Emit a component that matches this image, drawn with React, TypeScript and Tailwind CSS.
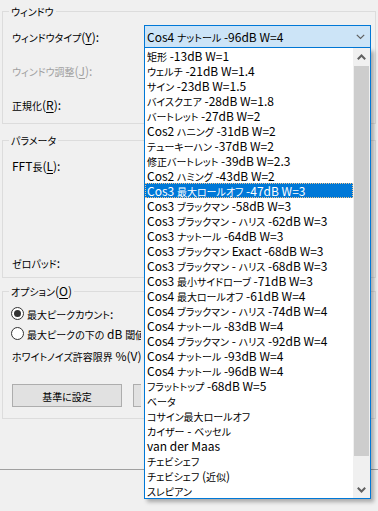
import { ReactNode } from "react";

const windowTypes = [
  "矩形 -13dB W=1",
  "ウェルチ -21dB W=1.4",
  "サイン -23dB W=1.5",
  "バイスクエア -28dB W=1.8",
  "バートレット -27dB W=2",
  "Cos2 ハニング -31dB W=2",
  "テューキーハン -37dB W=2",
  "修正バートレット -39dB W=2.3",
  "Cos2 ハミング -43dB W=2",
  "Cos3 最大ロールオフ -47dB W=3",
  "Cos3 ブラックマン -58dB W=3",
  "Cos3 ブラックマン - ハリス -62dB W=3",
  "Cos3 ナットール -64dB W=3",
  "Cos3 ブラックマン Exact -68dB W=3",
  "Cos3 ブラックマン - ハリス -68dB W=3",
  "Cos3 最小サイドローブ -71dB W=3",
  "Cos4 最大ロールオフ -61dB W=4",
  "Cos4 ブラックマン - ハリス -74dB W=4",
  "Cos4 ナットール -83dB W=4",
  "Cos4 ブラックマン - ハリス -92dB W=4",
  "Cos4 ナットール -93dB W=4",
  "Cos4 ナットール -96dB W=4",
  "フラットトップ -68dB W=5",
  "ベータ",
  "コサイン最大ロールオフ",
  "カイザー - ベッセル",
  "van der Maas",
  "チェビシェフ",
  "チェビシェフ (近似)",
  "スレピアン",
];

// Japanese runs are set a bit smaller, like the narrow UI font of the original
const T = ({ s }: { s: string }) => (
  <>
    {s.split(/([\u3000-\u30ff\u4e00-\u9fff]+)/).map((part, i) =>
      i % 2 === 1 ? (
        <span key={i} className="text-[10px]">
          {part}
        </span>
      ) : (
        part
      )
    )}
  </>
);

const Chevron = ({ up = false, bold = false }: { up?: boolean; bold?: boolean }) => (
  <svg width="9" height="6" viewBox="0 0 9 6">
    <path
      d={up ? "M0.8 5.2 L4.5 1.5 L8.2 5.2" : "M0.8 0.8 L4.5 4.5 L8.2 0.8"}
      fill="none"
      stroke="#606060"
      strokeWidth={bold ? 2 : 1.2}
    />
  </svg>
);

const Label = ({ text, k }: { text: string; k?: string }) => (
  <span className="whitespace-nowrap">
    <T s={text} />
    {k && (
      <>
        (<span className="underline underline-offset-2">{k}</span>)
      </>
    )}
  </span>
);

const GroupBox = ({ title, className = "", children }: { title: ReactNode; className?: string; children: ReactNode }) => (
  <fieldset className={`mx-[2px] border border-[#dcdcdc] ${className}`}>
    <legend className="ml-[6px] px-[2px] leading-[15px]">{title}</legend>
    {children}
  </fieldset>
);

const WindowTypeCombo = () => (
  <div className="relative z-10 ml-auto mr-[4px] w-[227px]">
    <div className="flex h-[23px] items-center justify-between border border-[#0078d7] bg-[#cce4f7] pl-[2px] pr-[5px]">
      <span className="whitespace-nowrap">
        <T s="Cos4 ナットール -96dB W=4" />
      </span>
      <Chevron />
    </div>
    <div className="absolute left-0 top-full flex h-[451px] w-full border-x border-b border-[#0078d7] bg-white shadow-[3px_3px_4px_rgba(0,0,0,0.3)]">
      <ul className="flex-1">
        {windowTypes.map((name, i) => (
          <li
            key={name + i}
            className={
              i === 9
                ? "h-[15px] whitespace-nowrap border border-dotted border-[#f2c48d] bg-[#0078d7] pl-[1px] leading-[13px] text-white"
                : "h-[15px] whitespace-nowrap pl-[2px] leading-[15px]"
            }
          >
            <T s={name} />
          </li>
        ))}
      </ul>
      <div className="flex w-[17px] flex-col bg-[#f0f0f0]">
        <div className="flex h-[18px] items-center justify-center">
          <Chevron up bold />
        </div>
        <div className="mx-[1px] h-[390px] bg-[#cdcdcd]" />
        <div className="flex flex-1 items-end justify-center pb-[5px]">
          <Chevron bold />
        </div>
      </div>
    </div>
  </div>
);

const rootClass =
  "relative h-[511px] w-[378px] overflow-hidden bg-[#f0f0f0] pt-[3px] font-['Noto_Sans_CJK_JP','Noto_Sans',sans-serif] text-[12px] leading-[15px] text-black [font-feature-settings:'palt']";

export default function App() {
  return (
    <div className={rootClass}>
      <GroupBox title={<Label text="ウィンドウ" />}>
        <div className="flex flex-col gap-[11px] pb-[7px] pl-[9px] pt-[6px]">
          <div className="flex h-[23px] items-center">
            <Label text="ウィンドウタイプ" k="Y" />:
            <WindowTypeCombo />
          </div>
          <div className="flex h-[23px] items-center text-[#a0a0a0]">
            <Label text="ウィンドウ調整" k="J" />:
          </div>
          <div className="flex h-[23px] items-center">
            <Label text="正規化" k="R" />:
          </div>
        </div>
      </GroupBox>

      <GroupBox title={<Label text="パラメータ" />} className="mt-[8px]">
        <div className="flex flex-col pb-[7px] pl-[9px] pt-[10px]">
          <div className="h-[15px]">
            <Label text="FFT長" k="L" />:
          </div>
          <div className="mt-[82px] h-[15px]">
            <Label text="ゼロパッド:" />
          </div>
        </div>
      </GroupBox>

      <GroupBox title={<Label text="オプション" k="O" />} className="mt-[5px]">
        <div className="flex w-[138px] flex-col overflow-hidden pb-[11px] pl-[8px] pt-[7px]">
          <label className="flex h-[15px] items-center gap-[3px] whitespace-nowrap">
            <span className="flex h-[13px] w-[13px] shrink-0 items-center justify-center rounded-full border border-[#333333] bg-white">
              <span className="h-[7px] w-[7px] rounded-full bg-[#333333]" />
            </span>
            <Label text="最大ピークカウント:" />
          </label>
          <label className="mt-[5px] flex h-[15px] items-center gap-[3px] whitespace-nowrap">
            <span className="h-[13px] w-[13px] shrink-0 rounded-full border border-[#333333] bg-white" />
            <Label text="最大ピークの下の dB 閾値:" />
          </label>
          <div className="mt-[7px] h-[15px] whitespace-nowrap pl-[1px]">
            <Label text="ホワイトノイズ許容限界 %(V):" />
          </div>
          <div className="mt-[21px] flex gap-[11px] pl-[1px]">
            <button className="h-[23px] w-[110px] shrink-0 border border-[#adadad] bg-[#e1e1e1]">
              <Label text="基準に設定" />
            </button>
            <button className="h-[23px] w-[110px] shrink-0 border border-[#adadad] bg-[#e1e1e1]" />
          </div>
        </div>
      </GroupBox>

      <div className="mt-[50px] border-t border-[#a0a0a0]" />
    </div>
  );
}
